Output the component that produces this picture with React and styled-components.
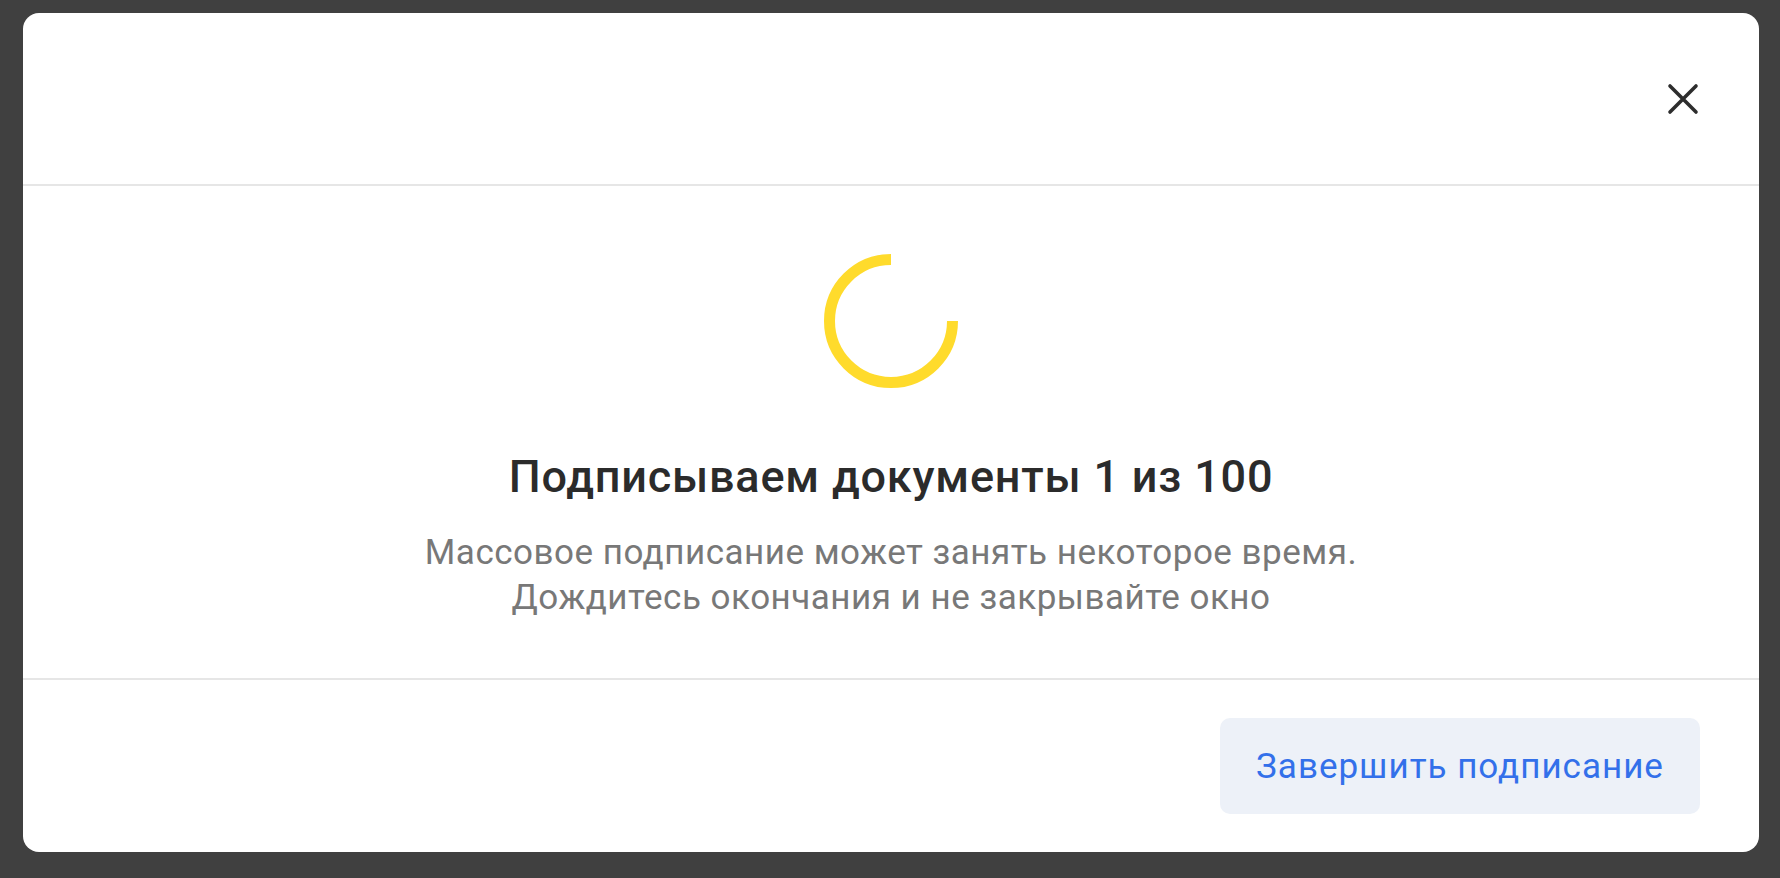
import React from "react";
import styled, { createGlobalStyle } from "styled-components";

const GlobalStyle = createGlobalStyle`
  html, body {
    margin: 0;
    padding: 0;
    background: #404040;
    font-family: Roboto, "Noto Sans", sans-serif;
  }
  * {
    box-sizing: border-box;
  }
`;

const Backdrop = styled.div`
  height: 878px;
  padding: 13px 21px 26px 23px;
`;

const Modal = styled.div`
  height: 839px;
  background: #ffffff;
  border-radius: 16px;
  display: flex;
  flex-direction: column;
  overflow: hidden;
`;

const Header = styled.div`
  height: 173px;
  display: flex;
  align-items: center;
  justify-content: flex-end;
  padding-right: 58px;
  border-bottom: 2px solid #e6e6e6;
`;

const CloseButton = styled.button`
  border: none;
  background: none;
  padding: 0;
  width: 36px;
  height: 36px;
  display: flex;
  align-items: center;
  justify-content: center;
  cursor: pointer;
`;

const Body = styled.div`
  height: 494px;
  display: flex;
  flex-direction: column;
  align-items: center;
  padding-top: 65px;
  border-bottom: 2px solid #e6e6e6;
`;

const Spinner = styled.svg`
  width: 140px;
  height: 140px;
  display: block;
`;

const Title = styled.h2`
  margin: 60px 0 0;
  font-size: 45px;
  line-height: 52px;
  font-weight: 500;
  letter-spacing: 0.8px;
  color: #2b2b2b;
`;

const Description = styled.p`
  margin: 27px 0 0;
  font-size: 35px;
  line-height: 45px;
  letter-spacing: 0.5px;
  color: #787878;
  text-align: center;
`;

const Footer = styled.div`
  flex: 1;
  display: flex;
  align-items: center;
  justify-content: flex-end;
  padding-right: 59px;
`;

const Button = styled.button`
  width: 480px;
  height: 96px;
  border: none;
  border-radius: 10px;
  background: #edf1f8;
  color: #3370ea;
  font-family: Roboto, "Noto Sans", sans-serif;
  font-size: 35px;
  letter-spacing: 1px;
  cursor: pointer;
`;

const App = () => {
  return (
    <Backdrop>
      <GlobalStyle />
      <Modal>
        <Header>
          <CloseButton aria-label="Закрыть">
            <svg width="32" height="32" viewBox="0 0 32 32">
              <path
                d="M3 3 L29 29 M29 3 L3 29"
                stroke="#2d2d2d"
                strokeWidth="3.6"
                strokeLinecap="round"
              />
            </svg>
          </CloseButton>
        </Header>
        <Body>
          <Spinner viewBox="0 0 140 140">
            <path
              d="M131.5 70 A61.5 61.5 0 1 1 70 8.5"
              fill="none"
              stroke="#ffdb2c"
              strokeWidth="11"
            />
          </Spinner>
          <Title>Подписываем документы 1 из 100</Title>
          <Description>
            Массовое подписание может занять некоторое время.
            <br />
            Дождитесь окончания и не закрывайте окно
          </Description>
        </Body>
        <Footer>
          <Button>Завершить подписание</Button>
        </Footer>
      </Modal>
    </Backdrop>
  );
};

export default App;
